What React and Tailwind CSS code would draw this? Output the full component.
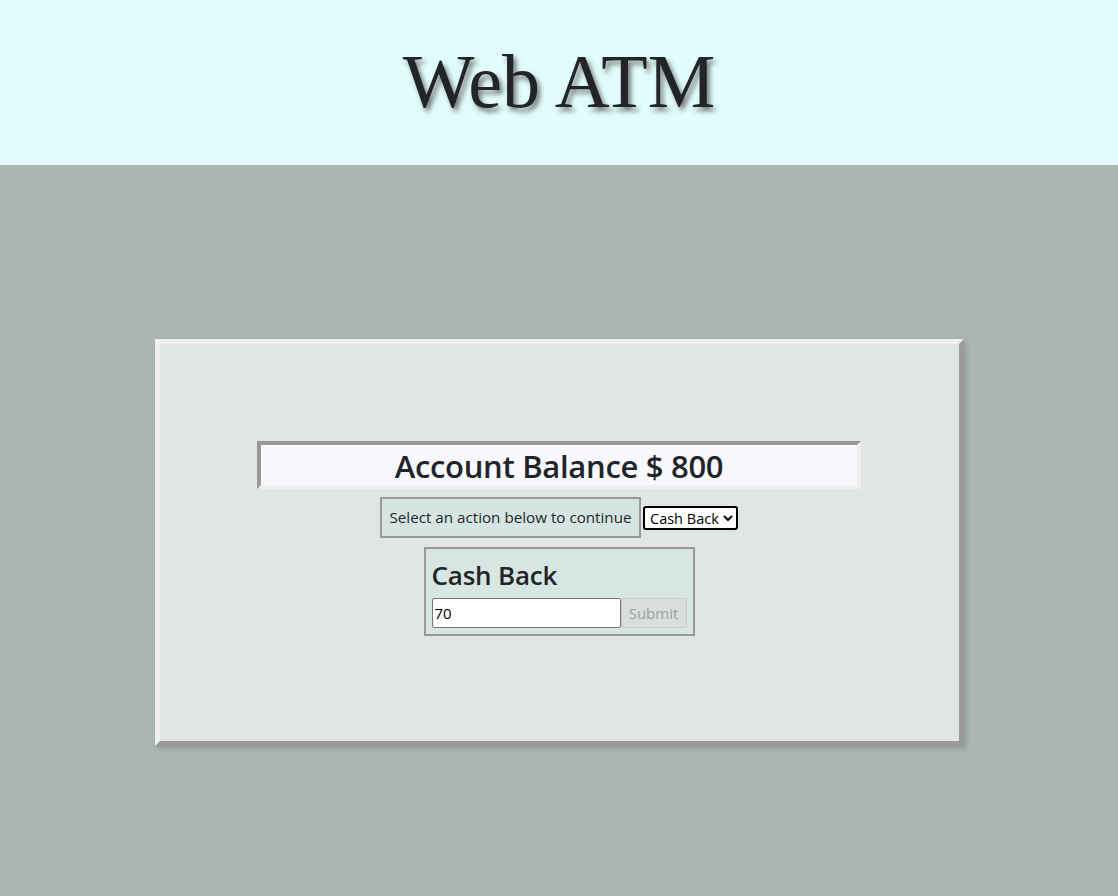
export default function App() {
  const font = { fontFamily: '"Open Sans", "Noto Sans", sans-serif' };
  return (
    <div className="min-h-[896px] bg-[#abb5b4] text-[#212529]" style={font}>
      <header className="h-[165px] bg-[#e0fcfc] flex justify-center pt-[38px]">
        <h1
          className="text-[76px] leading-[86px] text-[#212529] [text-shadow:3px_4px_5px_#777]"
          style={{ fontFamily: '"Liberation Serif", "Times New Roman", serif' }}
        >
          Web ATM
        </h1>
      </header>

      <main className="flex justify-center pt-[174px]">
        <div className="w-[809px] h-[407px] bg-[#e1e5e5] border-[5px] border-t-[#f0f0f0] border-l-[#f0f0f0] border-r-[#9a9a9a] border-b-[#9a9a9a] shadow-[2px_3px_5px_rgba(0,0,0,0.15)] flex flex-col items-center pt-[97px]">
          <div className="w-[604px] h-[48px] bg-[#f8f9fe] border-[4px] border-t-[#999] border-l-[#999] border-r-[#eee] border-b-[#eee] flex items-center justify-center">
            <h3 className="text-[31px] font-semibold leading-none tracking-[-0.3px] pt-[2px]">Account Balance $ 800</h3>
          </div>

          <div className="flex items-center gap-[2px] mt-[8px]">
            <div className="h-[41px] w-[261px] border-2 border-[#999] bg-[#d6e5e1] flex items-center justify-center text-[15.2px]">
              Select an action below to continue
            </div>
            <select
              defaultValue="cash"
              className="h-[24px] w-[95px] border-2 border-black rounded-[3px] bg-white text-[14.5px] px-[1px] text-black"
              style={font}
            >
              <option value="cash">Cash Back</option>
              <option value="deposit">Deposit</option>
            </select>
          </div>

          <div className="mt-[9px] w-[271px] h-[89px] border-2 border-[#999] bg-[#d7e6e2] px-[6px] pt-[9px]">
            <h3 className="text-[26px] font-semibold leading-[34px] tracking-[-0.2px]">Cash Back</h3>
            <div className="flex mt-[6px]">
              <input
                defaultValue="70"
                className="w-[189px] h-[30px] bg-white border border-[#767676] rounded-[2px] px-[2px] text-[15px] text-black"
                style={font}
              />
              <button
                disabled
                className="w-[66px] h-[30px] border border-[#c6ccca] rounded-[2px] bg-[#d8dfdc] text-[15px] text-[#9aa29f]"
                style={font}
              >
                Submit
              </button>
            </div>
          </div>
        </div>
      </main>
    </div>
  );
}
